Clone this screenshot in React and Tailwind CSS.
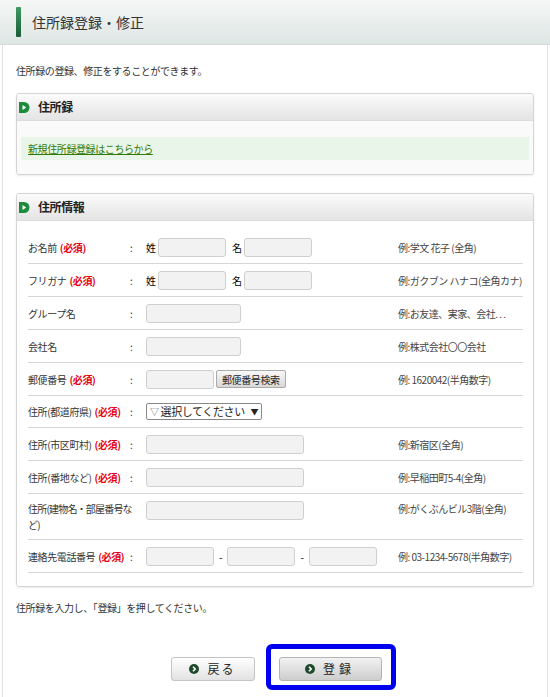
const font = "font-['Noto_Sans_CJK_JP','Noto_Sans',sans-serif]";

function SectionIcon() {
  return (
    <svg width="11" height="11" viewBox="0 0 11 11" className="shrink-0">
      <path d="M0 0H5A5.5 5.5 0 0 1 5 11H0Z" fill="#1d8a3c" />
      <path d="M3.5 3L7.2 5.5L3.5 8Z" fill="#fff" />
    </svg>
  );
}

function ArrowDot() {
  return (
    <svg width="10" height="10" viewBox="0 0 10 10" className="shrink-0">
      <circle cx="5" cy="5" r="5" fill="#1f4a2c" />
      <path d="M4 2.8L6.2 5L4 7.2" stroke="#fff" strokeWidth="1.6" fill="none" />
    </svg>
  );
}

function Box({ title, children, bodyClass }) {
  return (
    <div className="border border-[#d4d4d4] rounded-[3px] shadow-[0_1px_2px_rgba(0,0,0,0.08)] overflow-hidden">
      <div className="h-[27px] flex items-center gap-2 pl-[2px] bg-gradient-to-b from-[#fbfbfb] to-[#e4e4e4] border-b border-[#dcdcdc]">
        <SectionIcon />
        <span className="text-[12px] font-bold text-[#222]">{title}</span>
      </div>
      <div className={bodyClass}>{children}</div>
    </div>
  );
}

function Req() {
  return <span className="text-[#e60012] font-semibold ml-[3px]">(必須)</span>;
}

function Input({ w }) {
  return <div className={`h-[19px] bg-[#f2f2f2] border border-[#cfcfcf] rounded-[3px] ${w}`} />;
}

function Row({ label, req, colon = true, children, example, h = "h-[33px]", top }) {
  return (
    <div className={`flex ${top ? "items-start pt-[7px]" : "items-center"} ${h} border-b border-[#d6d6d6]`}>
      {colon ? (
        <>
          <div className="w-[102px] leading-[15px] text-[#333] whitespace-nowrap">
            {label}
            {req && <Req />}
          </div>
          <div className="w-[16px] text-[#333]">:</div>
        </>
      ) : (
        <div className="w-[118px] leading-[16px] text-[#333] tracking-[-0.8px]">{label}</div>
      )}
      <div className="w-[252px] flex items-center">{children}</div>
      <div className="flex-1 text-[#444] whitespace-nowrap tracking-[-0.5px]">{example}</div>
    </div>
  );
}

export default function App() {
  return (
    <div className={`w-[550px] h-[697px] bg-white text-[10px] tracking-[-0.4px] ${font}`}>
      <div className="h-[45px] flex items-center bg-gradient-to-b from-[#f6f7f7] to-[#dde6e4] border-b border-[#d4dcda]">
        <div className="ml-[16px] w-[5px] h-[30px] bg-gradient-to-b from-[#3f9a63] to-[#1a5c37] rounded-[1px]" />
        <span className="ml-[11px] text-[14px] text-[#333] tracking-normal">住所録登録・修正</span>
      </div>
      <div className="mx-[2px] h-[652px] border-x border-[#e2e2e2] px-[13px] pt-[18px]">
        <p className="text-[#333] leading-[16px]">住所録の登録、修正をすることができます。</p>

        <div className="mt-[14px]">
          <Box title="住所録" bodyClass="bg-[#fafafa] px-[4px] pt-[16px] pb-[14px]">
            <div className="h-[23px] bg-[#e9f5e8] flex items-center px-[7px]">
              <a className="text-[#2f7a07] underline">新規住所録登録はこちらから</a>
            </div>
          </Box>
        </div>

        <div className="mt-[18px]">
          <Box title="住所情報" bodyClass="bg-white pl-[11px] pr-[10px] pt-[10px] pb-[13px]">
            <Row label="お名前" req example="例:学文 花子 (全角)">
              <span className="w-[12px]">姓</span>
              <Input w="w-[68px]" />
              <span className="ml-[6px] w-[12px]">名</span>
              <Input w="w-[68px]" />
            </Row>
            <Row label="フリガナ" req example="例:ガクブン ハナコ(全角カナ)">
              <span className="w-[12px]">姓</span>
              <Input w="w-[68px]" />
              <span className="ml-[6px] w-[12px]">名</span>
              <Input w="w-[68px]" />
            </Row>
            <Row label="グループ名" example="例:お友達、実家、会社. . .">
              <Input w="w-[95px]" />
            </Row>
            <Row label="会社名" example="例:株式会社〇〇会社">
              <Input w="w-[95px]" />
            </Row>
            <Row label="郵便番号" req example="例: 1620042(半角数字)">
              <Input w="w-[68px]" />
              <button className="ml-[2px] h-[18px] px-[5px] text-[10px] text-[#222] border border-[#aaa] rounded-[2px] bg-gradient-to-b from-[#f8f8f8] to-[#d8d8d8]">
                郵便番号検索
              </button>
            </Row>
            <Row label="住所(都道府県)" req h="h-[32px]">
              <div className="h-[17px] w-[116px] border border-[#888] rounded-[2px] bg-white flex items-center px-[3px] text-[11px] text-[#222]">
                <span className="text-[9px] text-[#666] mr-[2px]">▽</span>
                <span className="flex-1">選択してください</span>
                <span className="text-[8px]">▼</span>
              </div>
            </Row>
            <Row label="住所(市区町村)" req example="例:新宿区(全角)">
              <Input w="w-[158px]" />
            </Row>
            <Row label="住所(番地など)" req example="例:早稲田町5-4(全角)">
              <Input w="w-[158px]" />
            </Row>
            <Row
              label={<>住所(建物名・部屋番号な<br />ど)</>}
              colon={false}
              top
              h="h-[46px]"
              example="例:がくぶんビル3階(全角)"
            >
              <Input w="w-[158px]" />
            </Row>
            <Row label="連絡先電話番号" req example="例: 03-1234-5678(半角数字)">
              <Input w="w-[68px]" />
              <span className="w-[13px] text-center">-</span>
              <Input w="w-[68px]" />
              <span className="w-[14px] text-center">-</span>
              <Input w="w-[68px]" />
            </Row>
          </Box>
        </div>

        <p className="mt-[13px] text-[#333] leading-[16px]">住所録を入力し、「登録」を押してください。</p>

        <div className="mt-[41px] flex justify-center gap-[24px] pl-[2px]">
          <button className="w-[84px] h-[24px] flex items-center justify-center gap-[8px] border border-[#c4c4c4] rounded-[3px] bg-gradient-to-b from-[#ffffff] to-[#e2e2e2] text-[12px] text-[#222] tracking-[2px]">
            <ArrowDot />
            <span>戻る</span>
          </button>
          <div className="relative">
            <button className="w-[103px] h-[24px] flex items-center justify-center gap-[8px] border border-[#b4b4b4] rounded-[3px] bg-gradient-to-b from-[#f2f2f2] to-[#cdcdcd] text-[12px] text-[#222] tracking-[4px]">
              <ArrowDot />
              <span>登録</span>
            </button>
            <div className="absolute -left-[13px] -right-[14px] -top-[13px] -bottom-[9px] border-[5px] border-[#0000f0] rounded-[6px]" />
          </div>
        </div>
      </div>
    </div>
  );
}
